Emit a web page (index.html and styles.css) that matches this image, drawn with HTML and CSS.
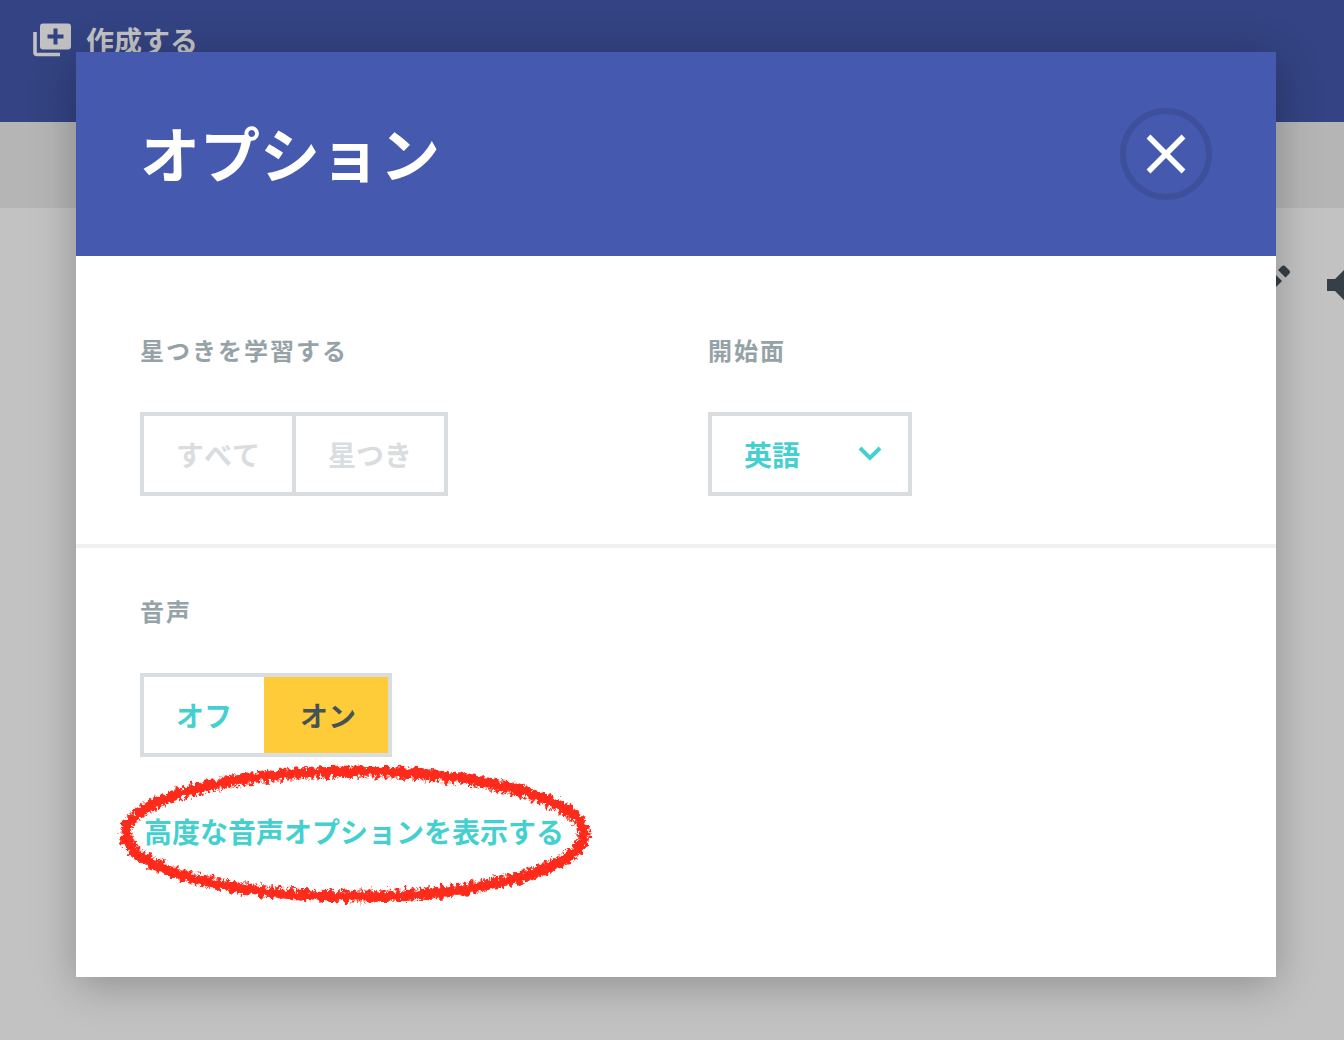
FILE: index.html
```html
<!DOCTYPE html>
<html lang="ja">
<head>
<meta charset="utf-8">
<meta name="viewport" content="width=device-width, initial-scale=1">
<title>オプション</title>
<link rel="stylesheet" href="styles.css">
</head>
<body>
<div class="page">
  <header class="topbar">
    <a class="create" href="#">
      <svg class="create-icon" viewBox="0 0 38 34" aria-hidden="true">
        <path d="M2 9v20.500q0 2 2 2h23" fill="none" stroke="currentColor" stroke-width="3.600"/>
        <path fill="currentColor" fill-rule="evenodd" d="M10 .5h25a3 3 0 0 1 3 3v20a3 3 0 0 1-3 3H10a3 3 0 0 1-3-3v-20a3 3 0 0 1 3-3zM20.500 5.500v6h-6v4h6v6h4v-6h6v-4h-6v-6z"/>
      </svg>
      <span>作成する</span>
    </a>
  </header>
  <div class="subbar"></div>
  <main class="content">
    <button class="tool" type="button" aria-label="編集">
      <svg viewBox="0 0 36 36" aria-hidden="true"><path fill="currentColor" d="M0 28 20 8l8 8L8 36H0zM24 5l3.500-3.500q2-2 4 0l3.500 3.500q2 2 0 4L31.500 12.500z"/></svg>
    </button>
    <button class="tool" type="button" aria-label="音声">
      <svg viewBox="0 0 36 36" aria-hidden="true"><path fill="currentColor" d="M0 14h8L18 4v32L8 26H0z"/></svg>
    </button>
  </main>
</div>

<div class="overlay">
  <section class="modal" role="dialog" aria-modal="true" aria-labelledby="title">
    <header class="modal-header">
      <h1 class="title" id="title">オプション</h1>
      <button class="close" type="button" aria-label="閉じる">
        <svg viewBox="0 0 40 40" aria-hidden="true"><path d="M2.500 2.500l35 35M37.500 2.500l-35 35" stroke="currentColor" stroke-width="5.500"/></svg>
      </button>
    </header>
    <div class="row row-first">
      <div class="field">
        <h2 class="label" id="starred">星つきを学習する</h2>
        <div class="toggle" role="group" aria-labelledby="starred">
          <button class="option" type="button" disabled>すべて</button>
          <button class="option" type="button" disabled>星つき</button>
        </div>
      </div>
      <div class="field">
        <label class="label" for="side">開始面</label>
        <div class="dropdown">
          <select id="side" class="select"><option>英語</option></select>
          <svg class="chevron" viewBox="0 0 24 16" aria-hidden="true"><path d="M2 2l10 10L22 2" fill="none" stroke="currentColor" stroke-width="4"/></svg>
        </div>
      </div>
    </div>
    <div class="row row-last">
      <div class="field">
        <h2 class="label" id="audio">音声</h2>
        <div class="toggle" role="group" aria-labelledby="audio">
          <button class="option" type="button" aria-pressed="false">オフ</button>
          <button class="option selected" type="button" aria-pressed="true">オン</button>
        </div>
        <div class="advanced">
          <a class="advanced-link" href="#">高度な音声オプションを表示する</a>
          <svg class="scribble" viewBox="0 0 480 148" aria-hidden="true">
            <defs>
              <filter id="chalk" filterUnits="userSpaceOnUse" x="0" y="0" width="480" height="148">
                <feTurbulence type="fractalNoise" baseFrequency="0.2" numOctaves="3" seed="7" result="noise"/>
                <feDisplacementMap in="SourceGraphic" in2="noise" scale="9" xChannelSelector="R" yChannelSelector="G"/>
              </filter>
            </defs>
            <ellipse cx="241" cy="76" rx="229" ry="63" fill="none" stroke="currentColor" stroke-width="9" filter="url(#chalk)"/>
            <ellipse cx="241" cy="76" rx="229" ry="62" fill="none" stroke="currentColor" stroke-width="13" stroke-dasharray="3 2 1 2 4 3" filter="url(#chalk)"/>
          </svg>
        </div>
      </div>
    </div>
  </section>
</div>
</body>
</html>
```
FILE: styles.css
```css
* {
  box-sizing: border-box;
}

body {
  margin: 0;
  min-height: 100vh;
  background: #c2c2c2;
  font-family: "Noto Sans CJK JP", sans-serif;
  font-weight: 700;
  font-size: 28px;
  line-height: 40px;
  font-kerning: none;
}

button,
select {
  margin: 0;
  padding: 0;
  border: 0;
  background: none;
  color: inherit;
  font: inherit;
  font-kerning: none;
}

svg {
  display: block;
}

.page {
  overflow: hidden;
}

.topbar {
  height: 122px;
  padding: 20px 33px;
  background: #334383;
}

.create {
  display: inline-flex;
  align-items: center;
  gap: 15px;
  color: #c2c2c2;
  text-decoration: none;
}

.create-icon {
  width: 38px;
  height: 34px;
}

.subbar {
  height: 86px;
  background: #b5b5b5;
}

.content {
  display: flex;
  justify-content: flex-end;
  gap: 37px;
  margin-right: -19px;
  padding-top: 57px;
  color: #363f45;
}

.tool {
  width: 36px;
  height: 36px;
}

.overlay {
  position: absolute;
  top: 0;
  left: 0;
  width: 100%;
  padding: 52px 68px 63px 76px;
}

.modal {
  background: #fff;
  box-shadow: 0 8px 40px rgba(0, 0, 0, 0.26);
}

.modal-header {
  display: flex;
  align-items: center;
  justify-content: space-between;
  padding: 56px 64px;
  background: #455aae;
  color: #fff;
}

.title {
  margin: 0;
  padding-bottom: 4px;
  font-size: 60px;
  line-height: 80px;
  font-weight: 700;
}

.close {
  display: flex;
  align-items: center;
  justify-content: center;
  width: 92px;
  height: 92px;
  border: 6px solid #3e509c;
  border-radius: 50%;
}

.close svg {
  width: 40px;
  height: 40px;
}

.row {
  display: grid;
  grid-template-columns: 1fr 1fr;
  column-gap: 64px;
  padding: 48px 64px;
}

.row-first {
  padding-top: 79px;
  border-bottom: 4px solid #eff0f1;
}

.row-last {
  padding-bottom: 129px;
}

.label {
  display: block;
  margin: 0 0 47px;
  color: #95a3a8;
  font-size: 24px;
  line-height: 30px;
  font-weight: 700;
  letter-spacing: 2px;
}

.toggle {
  display: inline-flex;
  vertical-align: top;
  border: 4px solid #d9dde0;
}

.option {
  height: 76px;
  padding: 0 32px;
  color: #45d0d0;
}

.option + .option {
  border-left: 4px solid #d9dde0;
}

.option:disabled {
  color: #d9dde0;
}

.option.selected {
  border-color: #fecc38;
  background: #fecc38;
  color: #455358;
}

.dropdown {
  position: relative;
  width: 204px;
  color: #45d0d0;
}

.select {
  display: block;
  width: 100%;
  height: 84px;
  padding: 0 32px;
  border: 4px solid #d9dde0;
  appearance: none;
}

.chevron {
  position: absolute;
  top: 34px;
  right: 30px;
  width: 24px;
  height: 16px;
  pointer-events: none;
}

.advanced {
  position: relative;
  width: max-content;
  margin-top: 58px;
  padding: 0 4px 1px;
  line-height: 32px;
}

.advanced-link {
  color: #45d0d0;
  text-decoration: none;
}

.scribble {
  position: absolute;
  top: 50%;
  left: 50%;
  width: 480px;
  height: 148px;
  transform: translate(-50%, -50%);
  color: #fe2b1a;
  pointer-events: none;
}
```
